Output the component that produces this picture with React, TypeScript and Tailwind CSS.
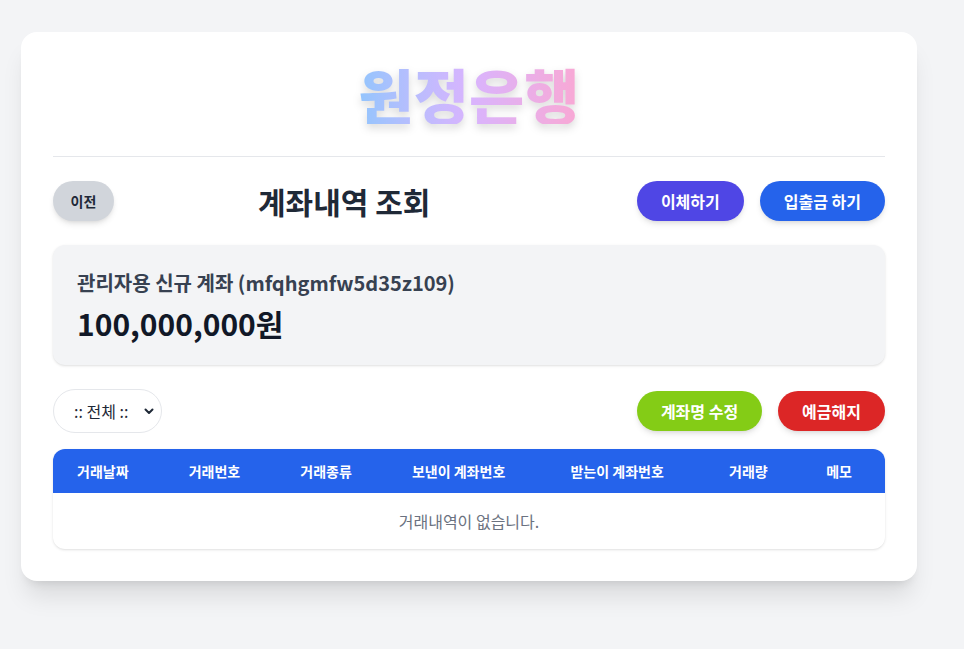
import React from "react";

const columns = [
  "거래날짜",
  "거래번호",
  "거래종류",
  "보낸이 계좌번호",
  "받는이 계좌번호",
  "거래량",
  "메모",
];

const App = () => {
  return (
    <div
      className="min-h-screen bg-[#f3f4f6] px-[21px] py-8"
      style={{ fontFamily: '"Noto Sans CJK KR", "Noto Sans", sans-serif' }}
    >
      {/* Card */}
      <div className="w-[896px] rounded-2xl bg-white p-8 shadow-xl">
        {/* Bank title */}
        <div className="flex justify-center border-b border-[#e5e7eb] pb-8">
          <h1 className="bg-gradient-to-r from-[#93c5fd] via-[#d8b4fe] to-[#f9a8d4] bg-clip-text text-6xl leading-none font-extrabold text-transparent drop-shadow-lg">
            원정은행
          </h1>
        </div>

        {/* Header row */}
        <div className="mt-6 flex items-center">
          <button className="h-10 w-[61px] rounded-full bg-[#d1d5db] text-sm font-bold text-[#1f2937] shadow-md">
            이전
          </button>
          <h2 className="ml-[144px] text-3xl font-bold text-[#1f2937]">계좌내역 조회</h2>
          <div className="ml-auto flex gap-4">
            <button className="h-10 rounded-full bg-[#4f46e5] px-6 text-base font-bold text-white shadow-md">
              이체하기
            </button>
            <button className="h-10 rounded-full bg-[#2563eb] px-6 text-base font-bold text-white shadow-md">
              입출금 하기
            </button>
          </div>
        </div>

        {/* Account summary */}
        <div className="mt-6 rounded-xl bg-[#f3f4f6] p-6 shadow-sm">
          <p className="text-xl font-semibold text-[#374151]">관리자용 신규 계좌 (mfqhgmfw5d35z109)</p>
          <p className="mt-2 text-3xl font-bold text-[#111827]">100,000,000원</p>
        </div>

        {/* Filter + actions */}
        <div className="mt-6 flex items-center">
          <div className="relative">
            <select className="h-11 w-[109px] appearance-none rounded-full border border-[#e5e7eb] bg-white pl-5 text-base text-[#1f2937] outline-none">
              <option>:: 전체 ::</option>
            </select>
            <svg
              className="pointer-events-none absolute top-1/2 right-[5px] h-3 w-3 -translate-x-[2px] -translate-y-1/2"
              viewBox="0 0 12 12"
              fill="none"
            >
              <path d="M2.5 4.5 6 8l3.5-3.5" stroke="#1f2937" strokeWidth="2" strokeLinecap="round" strokeLinejoin="round" />
            </svg>
          </div>
          <div className="ml-auto flex gap-4">
            <button className="h-10 rounded-full bg-[#84cc16] px-6 text-base font-bold text-white shadow-md">
              계좌명 수정
            </button>
            <button className="h-10 rounded-full bg-[#dc2626] px-6 text-base font-bold text-white shadow-md">
              예금해지
            </button>
          </div>
        </div>

        {/* Transactions table */}
        <div className="mt-4 overflow-hidden rounded-xl bg-white shadow-sm">
          <table className="w-full">
            <thead className="bg-[#2563eb]">
              <tr>
                {columns.map((col) => (
                  <th key={col} className="px-6 py-3 text-left text-sm font-bold text-white">
                    {col}
                  </th>
                ))}
              </tr>
            </thead>
            <tbody>
              <tr>
                <td colSpan={7} className="py-4 text-center text-base text-[#6b7280]">
                  거래내역이 없습니다.
                </td>
              </tr>
            </tbody>
          </table>
        </div>
      </div>
    </div>
  );
};

export default App;
